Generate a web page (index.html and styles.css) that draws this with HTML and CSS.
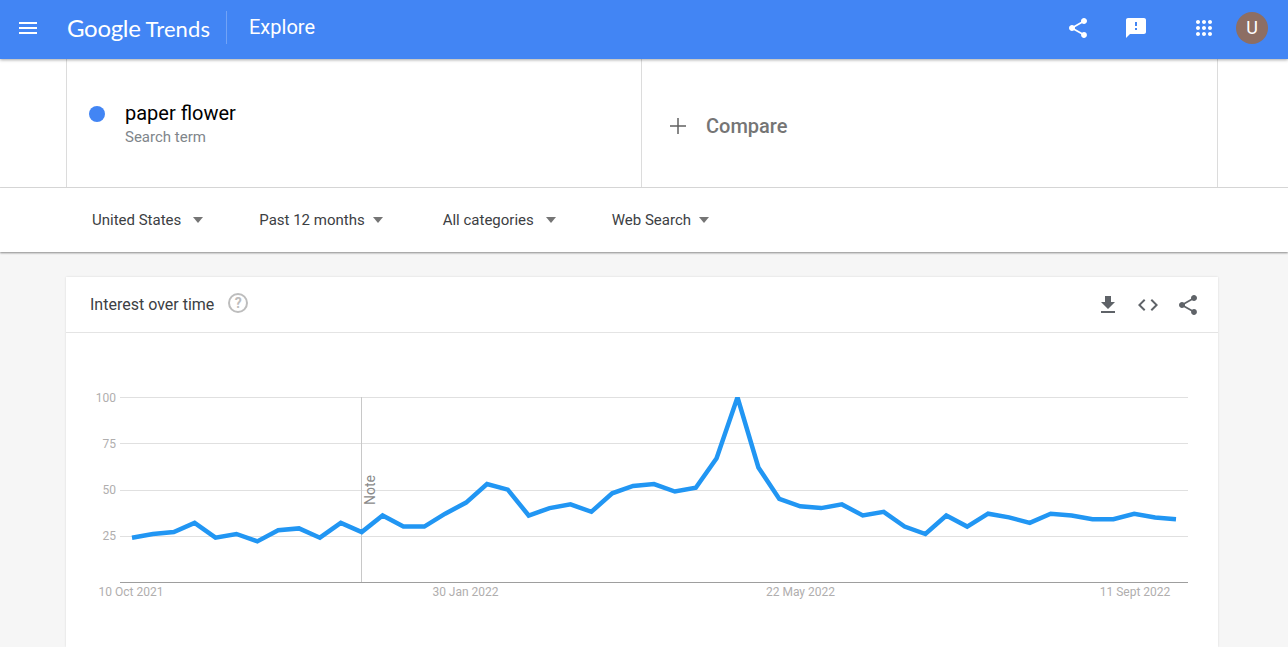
FILE: index.html
```html
<!doctype html>
<html lang="en">
  <head>
    <meta charset="utf-8">
    <meta name="viewport" content="width=device-width,initial-scale=1">
    <title>Explore - Google Trends</title>
    <link rel="stylesheet" href="styles.css">
  </head>

  <body>
    <header class="topbar">
      <svg class="menu-icon" viewBox="0 0 24 24" width="24" height="24"><path d="M3 18h18v-2H3v2zm0-5h18v-2H3v2zm0-7v2h18V6H3z"/></svg>
      <div class="logo"><span class="logo-google">Google</span><span class="logo-trends">Trends</span></div>
      <div class="page-title">Explore</div>
      <div class="topbar-actions">
        <svg class="share-top" viewBox="0 0 24 24" width="24" height="24"><path d="M18 16.08c-.76 0-1.44.3-1.96.77L8.91 12.7c.05-.23.09-.46.09-.7s-.04-.47-.09-.7l7.05-4.11c.54.5 1.25.81 2.04.81 1.66 0 3-1.34 3-3s-1.34-3-3-3-3 1.34-3 3c0 .24.04.47.09.7L8.04 9.81C7.5 9.31 6.79 9 6 9c-1.66 0-3 1.34-3 3s1.34 3 3 3c.79 0 1.5-.31 2.04-.81l7.12 4.16c-.05.21-.08.43-.08.65 0 1.61 1.31 2.92 2.92 2.92s2.92-1.31 2.92-2.92-1.31-2.92-2.92-2.92z"/></svg>
        <svg class="feedback-top" viewBox="0 0 24 24" width="24" height="24"><path d="M20 2H4c-1.1 0-1.99.9-1.99 2L2 22l4-4h14c1.1 0 2-.9 2-2V4c0-1.1-.9-2-2-2zm-7 12h-2v-2h2v2zm0-4h-2V6h2v4z"/></svg>
        <svg class="apps-top" viewBox="0 0 24 24" width="24" height="24"><path d="M6 8c1.1 0 2-.9 2-2s-.9-2-2-2-2 .9-2 2 .9 2 2 2zm6 12c1.1 0 2-.9 2-2s-.9-2-2-2-2 .9-2 2 .9 2 2 2zm-6 0c1.1 0 2-.9 2-2s-.9-2-2-2-2 .9-2 2 .9 2 2 2zm0-6c1.1 0 2-.9 2-2s-.9-2-2-2-2 .9-2 2 .9 2 2 2zm6 0c1.1 0 2-.9 2-2s-.9-2-2-2-2 .9-2 2 .9 2 2 2zm4-8c0 1.1.9 2 2 2s2-.9 2-2-.9-2-2-2-2 .9-2 2zm-4 2c1.1 0 2-.9 2-2s-.9-2-2-2-2 .9-2 2 .9 2 2 2zm6 6c1.1 0 2-.9 2-2s-.9-2-2-2-2 .9-2 2 .9 2 2 2zm0 6c1.1 0 2-.9 2-2s-.9-2-2-2-2 .9-2 2 .9 2 2 2z"/></svg>
        <div class="avatar">U</div>
      </div>
    </header>

    <section class="terms">
      <div class="term">
        <span class="term-dot"></span>
        <div>
          <div class="term-name">paper flower</div>
          <div class="term-type">Search term</div>
        </div>
      </div>
      <div class="compare">
        <svg class="plus-icon" viewBox="0 0 16 16" width="16" height="16"><path d="M7.25 0h1.5v7.25H16v1.5H8.75V16h-1.5V8.75H0v-1.5h7.25z"/></svg>
        <span>Compare</span>
      </div>
    </section>

    <nav class="filters">
      <div class="filter filter-geo">United States<i class="caret"></i></div>
      <div class="filter filter-time">Past 12 months<i class="caret"></i></div>
      <div class="filter filter-cat">All categories<i class="caret"></i></div>
      <div class="filter filter-prop">Web Search<i class="caret"></i></div>
    </nav>

    <main class="content">
      <section class="card">
        <div class="card-header">
          <span class="card-title">Interest over time</span>
          <span class="help-icon">?</span>
          <div class="card-actions">
            <svg viewBox="0 0 24 24" width="24" height="24"><path d="M19 9h-4V3H9v6H5l7 7 7-7zM5 18v2h14v-2H5z"/></svg>
            <svg viewBox="0 0 24 24" width="24" height="24"><path d="M9.4 16.6L4.8 12l4.6-4.6L8 6l-6 6 6 6 1.4-1.4zm5.2 0l4.6-4.6-4.6-4.6L16 6l6 6-6 6-1.4-1.4z"/></svg>
            <svg viewBox="0 0 24 24" width="24" height="24"><path d="M18 16.08c-.76 0-1.44.3-1.96.77L8.91 12.7c.05-.23.09-.46.09-.7s-.04-.47-.09-.7l7.05-4.11c.54.5 1.25.81 2.04.81 1.66 0 3-1.34 3-3s-1.34-3-3-3-3 1.34-3 3c0 .24.04.47.09.7L8.04 9.81C7.5 9.31 6.79 9 6 9c-1.66 0-3 1.34-3 3s1.34 3 3 3c.79 0 1.5-.31 2.04-.81l7.12 4.16c-.05.21-.08.43-.08.65 0 1.61 1.31 2.92 2.92 2.92s2.92-1.31 2.92-2.92-1.31-2.92-2.92-2.92z"/></svg>
          </div>
        </div>

        <!-- viewBox is in page coordinates so the numbers read against the screen -->
        <svg class="chart" viewBox="66 333 1152 314" width="1152" height="314">
          <defs>
            <clipPath id="plot-area"><rect x="120" y="397" width="1068" height="185"/></clipPath>
          </defs>
          <g class="grid">
            <line x1="120" x2="1188" y1="397.5" y2="397.5"/>
            <line x1="120" x2="1188" y1="443.5" y2="443.5"/>
            <line x1="120" x2="1188" y1="490.5" y2="490.5"/>
            <line x1="120" x2="1188" y1="536.5" y2="536.5"/>
          </g>
          <line class="note-line" x1="361.5" x2="361.5" y1="397" y2="582"/>
          <line class="axis" x1="120" x2="1188" y1="582.5" y2="582.5"/>
          <g class="y-labels">
            <text x="116" y="401.5">100</text>
            <text x="116" y="447.5">75</text>
            <text x="116" y="494">50</text>
            <text x="116" y="540">25</text>
          </g>
          <g class="x-labels">
            <text x="131" y="595.5">10 Oct 2021</text>
            <text x="465.5" y="595.5">30 Jan 2022</text>
            <text x="800.5" y="595.5">22 May 2022</text>
            <text x="1135" y="595.5">11 Sept 2022</text>
          </g>
          <text class="note-label" transform="translate(375 505) rotate(-90)">Note</text>
          <polyline class="trend" clip-path="url(#plot-area)" points="132,537.7 152.9,534 173.8,532.1 194.6,522.9 215.5,537.7 236.4,534 257.3,541.4 278.2,530.3 299,528.4 319.9,537.7 340.8,522.9 361.7,532.1 382.6,515.5 403.4,526.6 424.3,526.6 445.2,513.7 466.1,502.6 487,484.1 507.8,489.7 528.7,515.5 549.6,508.1 570.5,504.4 591.4,511.8 612.2,493.3 633.1,486 654,484.1 674.9,491.5 695.8,487.8 716.6,458.3 737.5,397.3 758.4,467.5 779.3,498.9 800.2,506.3 821,508.1 841.9,504.4 862.8,515.5 883.7,511.8 904.6,526.6 925.4,534 946.3,515.5 967.2,526.6 988.1,513.7 1009,517.4 1029.8,522.9 1050.7,513.7 1071.6,515.5 1092.5,519.2 1113.4,519.2 1134.2,513.7 1155.1,517.4 1176,519.2"/>
        </svg>
      </section>
    </main>
  </body>
</html>
```

FILE: styles.css
```css
html, body {
  height: 647px;
  overflow: hidden;
}

body {
  margin: 0;
  background: #f6f6f6;
  color: #202124;
  font-family: Roboto, "Liberation Sans", sans-serif;
  font-size: 15px;
}

.topbar {
  position: relative;
  z-index: 2;
  display: flex;
  align-items: center;
  height: 59px;
  padding-left: 16px;
  background: #4285f4;
  color: #fff;
  box-shadow: 0 1px 3px rgba(0, 0, 0, 0.35);
}

.topbar svg {
  fill: #fff;
  flex: none;
}

.menu-icon {
  margin-top: -4px;
}

.logo {
  display: flex;
  align-items: baseline;
  margin-left: 27px;
  margin-top: -4px;
  width: 159px;
  height: 33px;
  line-height: 33px;
  border-right: 1px solid rgba(255, 255, 255, 0.25);
  font-family: Lato, Roboto, sans-serif;
  font-size: 24px;
}

.logo-google {
  letter-spacing: -0.3px;
}

.logo-trends {
  margin-left: 5px;
  font-size: 22px;
  letter-spacing: 0.1px;
}

.page-title {
  margin-left: 22px;
  margin-top: -6px;
  font-size: 20px;
}

.topbar-actions {
  display: flex;
  align-items: center;
  margin-left: auto;
  padding-right: 20px;
  margin-top: -4px;
}

.feedback-top {
  margin-left: 34px;
}

.apps-top {
  margin-left: 44px;
}

.avatar {
  display: flex;
  align-items: center;
  justify-content: center;
  width: 32px;
  height: 32px;
  margin-left: 20px;
  border-radius: 50%;
  background: #8d6e63;
  font-size: 18px;
}

.terms {
  display: flex;
  height: 128px;
  padding-left: 66px;
  background: #fff;
  border-bottom: 1px solid #dcdcdc;
}

.term, .compare {
  display: flex;
  box-sizing: border-box;
  border-left: 1px solid #dcdcdc;
}

.term {
  align-items: flex-start;
  width: 575px;
  padding: 41px 0 0 22px;
}

.term-dot {
  width: 16px;
  height: 16px;
  margin: 6px 20px 0 0;
  border-radius: 50%;
  background: #4285f4;
}

.term-name {
  font-size: 20px;
  line-height: 26px;
  color: #000;
}

.term-type {
  margin-top: 1px;
  line-height: 20px;
  color: #80868b;
}

.compare {
  align-items: center;
  width: 577px;
  padding: 6px 0 0 28px;
  border-right: 1px solid #dcdcdc;
  font-size: 20px;
  font-weight: 500;
  color: #757575;
}

.plus-icon {
  margin-right: 20px;
  fill: #616161;
}

.filters {
  position: relative;
  z-index: 1;
  display: flex;
  align-items: center;
  height: 64px;
  padding-left: 92px;
  background: #fff;
  box-shadow: 0 1px 2px rgba(0, 0, 0, 0.45);
  color: #3c4043;
}

.filter {
  display: flex;
  align-items: center;
}

.filter-time {
  margin-left: 56px;
}

.filter-cat {
  margin-left: 60px;
}

.filter-prop {
  margin-left: 56px;
}

.caret {
  margin-left: 12px;
  border-top: 6px solid #757575;
  border-left: 5px solid transparent;
  border-right: 5px solid transparent;
}

.filter-time .caret, .filter-prop .caret {
  margin-left: 8px;
}

.content {
  padding: 25px 70px 0 66px;
}

.card {
  height: 370px;
  background: #fff;
  box-shadow: 0 0 2px rgba(0, 0, 0, 0.12);
}

.card-header {
  display: flex;
  align-items: center;
  height: 55px;
  padding: 0 18px 0 24px;
  border-bottom: 1px solid #e4e4e4;
  font-size: 16px;
  color: #3c4043;
}

.help-icon {
  display: flex;
  align-items: center;
  justify-content: center;
  box-sizing: border-box;
  width: 20px;
  height: 20px;
  margin-left: 14px;
  margin-top: -3px;
  border: 2px solid #bdbdbd;
  border-radius: 50%;
  color: #bdbdbd;
  font-size: 14px;
  font-weight: 700;
}

.card-actions {
  display: flex;
  gap: 16px;
  margin-left: auto;
}

.card-actions svg {
  fill: #5f6368;
}

.chart {
  display: block;
}

.grid line {
  stroke: #e0e0e0;
  stroke-width: 1;
}

.axis {
  stroke: #9e9e9e;
  stroke-width: 1;
}

.note-line {
  stroke: #c8c8c8;
  stroke-width: 1;
}

.y-labels text, .x-labels text {
  font-size: 12px;
  fill: #b0aeae;
}

.y-labels text {
  text-anchor: end;
}

.x-labels text {
  text-anchor: middle;
}

.note-label {
  font-size: 14px;
  fill: #8a8a8a;
}

.trend {
  fill: none;
  stroke: #2196f3;
  stroke-width: 4.5;
  stroke-linejoin: miter;
}
```
